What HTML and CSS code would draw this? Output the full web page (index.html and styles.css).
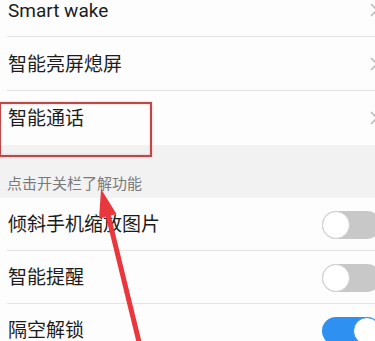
FILE: index.html
```html
<!DOCTYPE html>
<html lang="zh-CN">
<head>
<meta charset="utf-8">
<link rel="stylesheet" href="styles.css">
</head>
<body>
<div class="page">
  <div class="list list-top">
    <div class="row">
      <span class="title">Smart wake</span>
      <svg class="chev" width="8" height="14" viewBox="0 0 8 14"><path d="M1 1 L7 7 L1 13" fill="none" stroke="#bdbdbd" stroke-width="1.6"/></svg>
    </div>
    <div class="row">
      <span class="title">智能亮屏熄屏</span>
      <svg class="chev" width="8" height="14" viewBox="0 0 8 14"><path d="M1 1 L7 7 L1 13" fill="none" stroke="#bdbdbd" stroke-width="1.6"/></svg>
    </div>
    <div class="row last">
      <span class="title">智能通话</span>
      <svg class="chev" width="8" height="14" viewBox="0 0 8 14"><path d="M1 1 L7 7 L1 13" fill="none" stroke="#bdbdbd" stroke-width="1.6"/></svg>
    </div>
  </div>
  <div class="section-header">点击开关栏了解功能</div>
  <div class="list">
    <div class="row trow">
      <span class="title">倾斜手机缩放图片</span>
      <span class="toggle"><span class="knob"></span></span>
    </div>
    <div class="row trow">
      <span class="title">智能提醒</span>
      <span class="toggle"><span class="knob"></span></span>
    </div>
    <div class="row trow">
      <span class="title">隔空解锁</span>
      <span class="toggle on"><span class="knob"></span></span>
    </div>
  </div>

  <div class="highlight"></div>
  <svg class="arrow" width="375" height="341" viewBox="0 0 375 341">
    <polygon points="101,189 116.5,214 99.1,218.4" fill="#e8383d"/>
    <line x1="107.8" y1="214" x2="141" y2="350" stroke="#e8383d" stroke-width="5"/>
  </svg>
</div>
</body>
</html>
```
FILE: styles.css
```css
html, body {
  margin: 0;
  padding: 0;
  overflow: hidden;
  background: #fdfdfd;
}
.page {
  position: relative;
  width: 384px;
  height: 341px;
  overflow: hidden;
  font-family: "Roboto", "Noto Sans CJK SC", sans-serif;
  color: #1c1c1c;
}
.list {
  display: flex;
  flex-direction: column;
  background: #fdfdfd;
}
.list-top {
  margin-top: -17px;
}
.row {
  position: relative;
  height: 54px;
  display: flex;
  align-items: center;
  justify-content: space-between;
  padding: 0 6px 0 8px;
  box-sizing: border-box;
}
.list-top .row + .row::before,
.trow + .trow::before {
  content: "";
  position: absolute;
  left: 7px;
  right: 0;
  top: -1px;
  height: 1px;
  background: #e4e4e4;
}
.trow {
  height: 53px;
  padding-right: 3px;
}
.title {
  font-size: 19px;
  line-height: 1;
}
.chev {
  display: block;
}
.section-header {
  height: 53px;
  background: #f2f2f2;
  display: flex;
  align-items: flex-end;
  padding: 0 0 5px 7px;
  box-sizing: border-box;
  font-size: 15px;
  color: #7a7a7a;
  line-height: 1.2;
}
.toggle {
  position: relative;
  width: 59px;
  height: 28px;
  border-radius: 14px;
  background: #c8c8c8;
  box-sizing: border-box;
  display: flex;
  align-items: center;
}
.knob {
  width: 28px;
  height: 28px;
  border-radius: 50%;
  background: #fff;
  box-sizing: border-box;
  border: 1px solid #cfcfcf;
}
.toggle.on {
  background: #2e90f0;
  justify-content: flex-end;
}
.toggle.on .knob {
  border-color: #2e90f0;
}
.highlight {
  position: absolute;
  left: -1px;
  top: 102px;
  width: 153px;
  height: 55px;
  box-sizing: border-box;
  border: 2px solid #b84a4c;
  box-shadow: 0 0 2px rgba(230, 120, 120, 0.6), inset 0 0 2px rgba(230, 120, 120, 0.6);
}
.arrow {
  position: absolute;
  left: 0;
  top: 0;
}
```
